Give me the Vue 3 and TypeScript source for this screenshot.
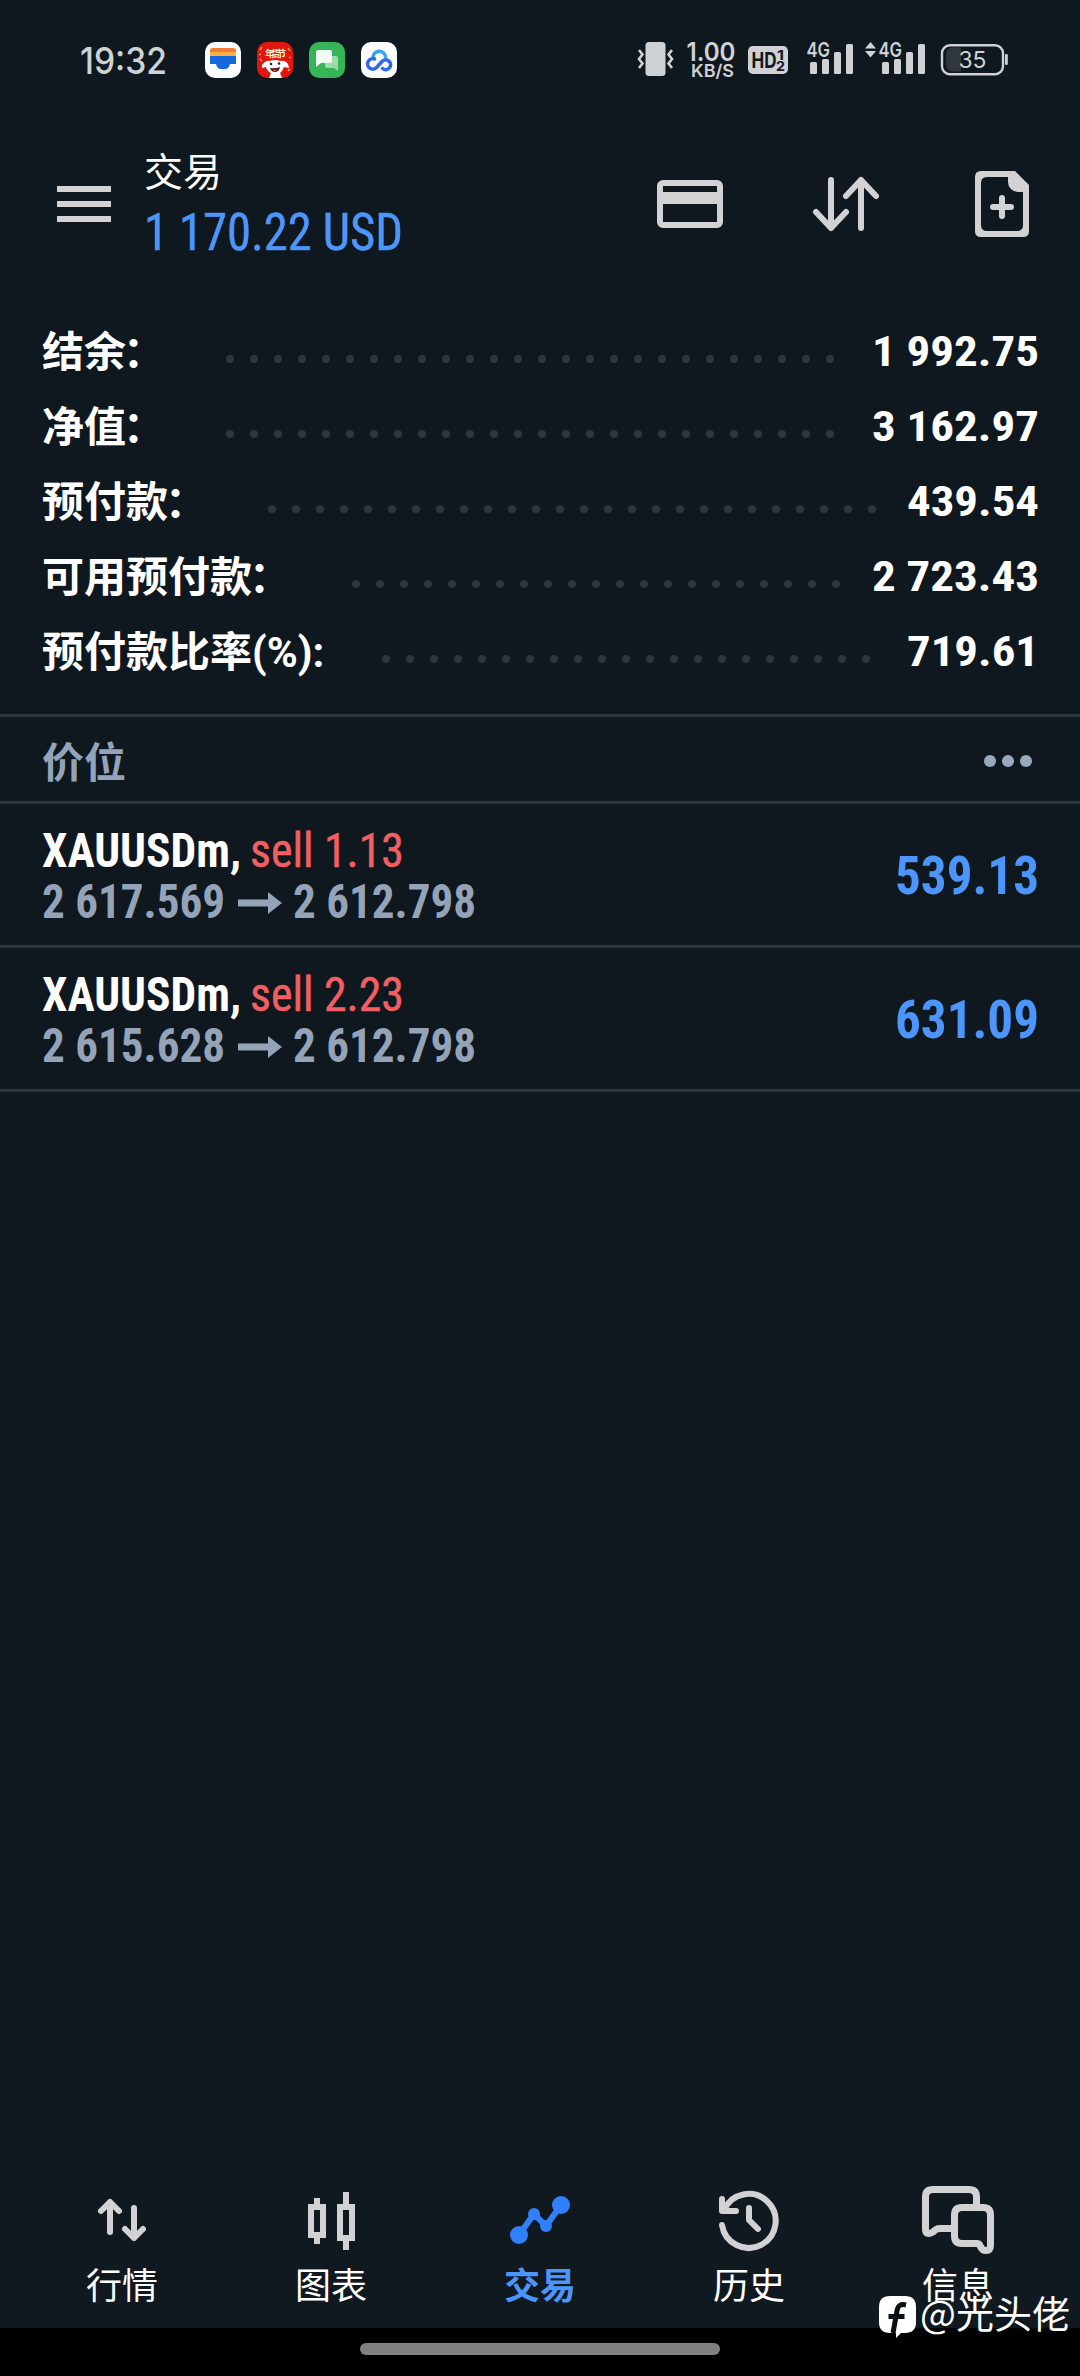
<script setup lang="ts">
import { h } from 'vue'

interface FitProps {
  text: string
  width: number
  size: number
  weight?: number
}

// Condensed text: the box is exactly as tall as the capitals, the glyphs are squeezed to the width.
const FitText = (p: FitProps) => {
  const cap = Math.round(p.size * 0.711)
  return h('svg', { width: p.width, height: cap, class: 'fit' }, [
    h(
      'text',
      {
        x: 0,
        y: cap,
        textLength: p.width,
        lengthAdjust: 'spacingAndGlyphs',
        'font-size': p.size,
        'font-weight': p.weight ?? 400,
        fill: 'currentColor',
        stroke: 'currentColor',
        'stroke-width': p.weight ? 0 : 0.5,
      },
      p.text,
    ),
  ])
}
FitText.props = ['text', 'width', 'size', 'weight']

interface SummaryRow {
  label: string
  colon: string
  dots: number
  value: string
  valueWidth: number
}

const summary: SummaryRow[] = [
  { label: '结余', colon: '：', dots: 26, value: '1 992.75', valueWidth: 167 },
  { label: '净值', colon: '：', dots: 26, value: '3 162.97', valueWidth: 167 },
  { label: '预付款', colon: '：', dots: 26, value: '439.54', valueWidth: 132 },
  { label: '可用预付款', colon: '：', dots: 21, value: '2 723.43', valueWidth: 167 },
  { label: '预付款比率(%)', colon: ':', dots: 21, value: '719.61', valueWidth: 132 },
]

const positions = [
  { symbol: 'XAUUSDm,', side: 'sell 1.13', open: '2 617.569', current: '2 612.798', profit: '539.13' },
  { symbol: 'XAUUSDm,', side: 'sell 2.23', open: '2 615.628', current: '2 612.798', profit: '631.09' },
]
</script>

<template>
  <div class="screen">
    <header class="status">
      <svg class="clock" width="90" height="44" viewBox="78 38 90 44">
        <text x="80" y="74" font-size="36.5" textLength="87" lengthAdjust="spacingAndGlyphs" fill="#cfd2d5">19:32</text>
      </svg>
      <div class="apps">
        <svg width="36" height="36" viewBox="0 0 36 36">
          <rect width="36" height="36" rx="10" fill="#fafbfd" />
          <path d="M5 14V9q0-3 3-3h20q3 0 3 3v5z" fill="#f47b35" />
          <path d="M5 10h26v6H5z" fill="#fbb043" />
          <path d="M5 14h26v8h-6q-1 5-5 5h-4q-4 0-5-5H5z" fill="#1668dc" />
        </svg>
        <svg width="36" height="36" viewBox="0 0 36 36">
          <rect width="36" height="36" rx="10" fill="#e0170f" />
          <text x="8" y="15" font-size="9.5" font-weight="700" textLength="21" fill="#fff3cf">年货节</text>
          <path d="M3 8l2-3M31 6l2 3M3 17l2 2M2 13l2-1M32 15l2 1M31 29l2-2" stroke="#ffb26b" stroke-width="1.2" />
          <path d="M5 23q4-5 8-4q5-2 10 0q5-1 8 3l1 4-5-1q-2 5-4 6l2 5H12l2-5q-4-2-5-6l-4 1z" fill="#fff" />
          <circle cx="14" cy="22" r="1.3" fill="#222" />
          <circle cx="22" cy="21.5" r="1.3" fill="#222" />
          <path d="M13 26q5 1 10-1q-1 5-5 5t-5-4z" fill="#5b1717" />
          <path d="M16 28.5q2-1 4-.5q-2 2-4 .5z" fill="#f06464" />
        </svg>
        <svg width="36" height="36" viewBox="0 0 36 36">
          <rect width="36" height="36" rx="10" fill="#35b558" />
          <path d="M16 14h11q2 0 2 2v13l-4-3H18q-2 0-2-2z" fill="#9bdcaa" />
          <path d="M9 8h12q2 0 2 2v9q0 2-2 2H12l-5 4V10q0-2 2-2z" fill="#f2fbf3" />
        </svg>
        <svg width="36" height="36" viewBox="0 0 36 36">
          <rect width="36" height="36" rx="10" fill="#fafbfd" />
          <path d="M12 15.5a6.3 6.3 0 0 1 12.5-1" fill="none" stroke="#35a5e8" stroke-width="3.6" stroke-linecap="round" />
          <path d="M13.5 17a5.2 5.2 0 1 0 2 8.5L21 19.5a4.9 4.9 0 1 1 .5 7" fill="none" stroke="#2f66ea" stroke-width="3.5" stroke-linecap="round" stroke-linejoin="round" />
        </svg>
      </div>
      <svg class="system" width="380" height="44" viewBox="634 38 380 44" fill="#cfd1d4">
        <rect x="645.5" y="42" width="20" height="34" rx="3.5" />
        <path d="M639 50l3.5 4.5-3.5 4.500 3.500 4.500-3.500 4.500M672 50l-3.500 4.500 3.500 4.500-3.500 4.500 3.500 4.500" fill="none" stroke="#cfd1d4" stroke-width="2.6" />
        <text x="686.5" y="61" font-size="25" font-weight="600" textLength="49" lengthAdjust="spacingAndGlyphs">1.00</text>
        <text x="691" y="77" font-size="17.5" font-weight="600" textLength="43" lengthAdjust="spacingAndGlyphs">KB/S</text>
        <rect x="748" y="46" width="40" height="28" rx="5" />
        <g fill="#101820" font-weight="700">
          <text x="751.5" y="67.5" font-size="21" textLength="25" lengthAdjust="spacingAndGlyphs">HD</text>
          <text x="777" y="59.5" font-size="13.5" textLength="7" lengthAdjust="spacingAndGlyphs">1</text>
          <text x="776" y="71" font-size="13.5" textLength="9" lengthAdjust="spacingAndGlyphs">2</text>
        </g>
        <rect x="810" y="62" width="7" height="12" rx="1.5" />
        <rect x="822" y="59" width="7" height="15" rx="1.5" />
        <rect x="834" y="52" width="7" height="22" rx="1.5" />
        <rect x="846" y="44" width="7" height="30" rx="1.5" />
        <text x="806.5" y="57" font-size="20" font-weight="600" textLength="23.5" lengthAdjust="spacingAndGlyphs">4G</text>
        <path d="M865 48.500l5.500-6.500 5.500 6.500zM865 51l5.500 6.500 5.500-6.500z" />
        <rect x="882" y="62" width="7" height="12" rx="1.5" />
        <rect x="894" y="59" width="7" height="15" rx="1.5" />
        <rect x="906" y="52" width="7" height="22" rx="1.5" />
        <rect x="918" y="44" width="7" height="30" rx="1.5" />
        <text x="878.5" y="57" font-size="20" font-weight="600" textLength="23.5" lengthAdjust="spacingAndGlyphs">4G</text>
        <path d="M961 47.500h-8q-7 0-7 7v10q0 7 7 7h8z" fill="#2f363e" />
        <rect x="942" y="45.2" width="61" height="29" rx="8" fill="none" stroke="#cfd1d4" stroke-width="2.4" />
        <rect x="1005" y="54" width="2.8" height="11" rx="1.2" />
        <text x="958.5" y="68" font-size="23" textLength="28" lengthAdjust="spacingAndGlyphs">35</text>
      </svg>
    </header>

    <div class="appbar">
      <svg class="menu" width="54" height="36" viewBox="0 0 54 36" fill="#d2d2d4">
        <path d="M0 0h54v6H0zM0 15h54v6H0zM0 30h54v6H0z" />
      </svg>
      <div class="heading">
        <div class="title">交易</div>
        <FitText class="blue" text="1 170.22 USD" :width="259" :size="51" />
      </div>
      <div class="actions">
        <svg width="72" height="72" viewBox="654 168 72 72" fill="none" stroke="#d2d2d4" stroke-width="6">
          <rect x="660" y="183" width="60" height="42" rx="3" />
          <path d="M660 198h60" stroke-width="12" />
        </svg>
        <svg width="72" height="72" viewBox="810 168 72 72" fill="none" stroke="#d2d2d4" stroke-width="6" stroke-linecap="round" stroke-linejoin="round">
          <path d="M831 180v48M816 212l15 16 15-16M861 228v-48M846 196l15-16 15 16" />
        </svg>
        <svg width="72" height="72" viewBox="966 168 72 72" fill="#d2d2d4">
          <path fill-rule="evenodd" d="M981 171h34l14 14v46q0 6-6 6h-42q-6 0-6-6v-54q0-6 6-6zM987 177q-6 0-6 6v42q0 6 6 6h30q6 0 6-6v-33h-5a10 10 0 0 1-10-10v-5z" />
          <path d="M1002 198v18M993 207h18" stroke="#d2d2d4" stroke-width="6" stroke-linecap="round" />
        </svg>
      </div>
    </div>

    <section class="summary">
      <div v-for="row in summary" :key="row.label" class="sum-row">
        <span class="sum-label">{{ row.label }}<span :class="{ wide: row.colon === '：' }">{{ row.colon }}</span></span>
        <i class="leader" :style="{ width: row.dots * 24 + 'px' }" />
        <FitText class="sum-value" :text="row.value" :width="row.valueWidth" :size="42" :weight="700" />
      </div>
    </section>

    <section class="section-head">
      <span>价位</span>
      <svg class="more" width="48" height="12" viewBox="0 0 48 12" fill="#99a8bd">
        <circle cx="6" cy="6" r="6" /><circle cx="24" cy="6" r="6" /><circle cx="42" cy="6" r="6" />
      </svg>
    </section>

    <section v-for="p in positions" :key="p.open" class="position">
      <div class="detail">
        <div class="line">
          <FitText class="symbol" :text="p.symbol" :width="199" :size="48" :weight="700" />
          <FitText class="side" :text="p.side" :width="154" :size="48" />
        </div>
        <div class="line prices">
          <FitText :text="p.open" :width="183" :size="48" :weight="700" />
          <svg class="arrow" width="44" height="22" viewBox="0 0 44 22" fill="currentColor">
            <path d="M0 7.500h30V0l14 11-14 11v-7.500H0z" />
          </svg>
          <FitText :text="p.current" :width="183" :size="48" :weight="700" />
        </div>
      </div>
      <FitText class="blue profit" :text="p.profit" :width="144" :size="54" :weight="700" />
    </section>

    <nav class="tabs">
      <div class="tab">
        <svg width="72" height="72" viewBox="86 2184 72 72" fill="none" stroke="#d2d2d4" stroke-width="6" stroke-linecap="round" stroke-linejoin="round">
          <path d="M110 2232v-30M101 2211l9-9 9 9M134 2208v30M125 2229l9 9 9-9" />
        </svg>
        <span>行情</span>
      </div>
      <div class="tab">
        <svg width="72" height="72" viewBox="295 2184 72 72" fill="none" stroke="#d2d2d4" stroke-width="6">
          <path d="M311 2207h12v28h-12zM317 2198v6M317 2238v6M340 2207h12v31h-12zM346 2192v12M346 2241v9" />
        </svg>
        <span>图表</span>
      </div>
      <div class="tab active">
        <svg width="72" height="72" viewBox="504 2184 72 72" fill="#3080fa">
          <path d="M519 2235l15-21 12 12 15-21" fill="none" stroke="#3080fa" stroke-width="6" />
          <circle cx="519" cy="2235" r="9" /><circle cx="534" cy="2214" r="6" />
          <circle cx="546" cy="2226" r="6" /><circle cx="561" cy="2205" r="9" />
        </svg>
        <span>交易</span>
      </div>
      <div class="tab">
        <svg width="72" height="72" viewBox="713 2184 72 72" fill="none" stroke="#d2d2d4" stroke-width="6" stroke-linecap="round" stroke-linejoin="round">
          <path d="M722 2225a27 27 0 1 0 2-15M722 2199v12h14M749 2208v12l9 9" />
        </svg>
        <span>历史</span>
      </div>
      <div class="tab">
        <svg width="72" height="72" viewBox="922 2184 72 72" fill="none" stroke="#d2d2d4" stroke-width="7" stroke-linejoin="round">
          <path d="M952 2228.500h-12q-4 0-7 3.500q-7.500 4-7.500-3v-32q0-7.500 7.500-7.500h36q7.500 0 7.500 7.500v9" />
          <path d="M962 2207.500h21q7.500 0 7.500 7.500v30q0 5.500-4.500 5.500-4 0-5.500-4-1-3-4-3H962q-7.500 0-7.500-7.500V2215q0-7.500 7.500-7.500z" />
        </svg>
        <span>信息</span>
      </div>
    </nav>
    <div class="homebar"><i /></div>

    <div class="watermark">
      <svg width="37" height="42" viewBox="0 0 37 42">
        <path d="M11 0h15q11 0 11 11v15q0 11-11 11h-4l-5 5v-5h-6Q0 37 0 26V11Q0 0 11 0z" fill="#fff" />
        <path d="M27 9q-8-2-9 6l-4 22M9.500 20.500h16" fill="none" stroke="#0a0f14" stroke-width="5" />
      </svg>
      <span>@光头佬</span>
    </div>
  </div>
</template>

<style>
body {
  background: #0f171f;
}
</style>

<style scoped>
.screen {
  position: relative;
  display: flex;
  flex-direction: column;
  width: 1080px;
  height: 2376px;
  overflow: hidden;
  background: #0f171f;
  color: #fff;
  font-family: Roboto, 'Noto Sans CJK SC', sans-serif;
}
svg {
  display: block;
  flex: none;
  overflow: visible;
}
.fit {
  font-family: 'Roboto Condensed', Roboto, sans-serif;
  white-space: pre;
}
.blue {
  color: #4c95fb;
}
.status {
  display: flex;
  height: 82px;
  padding: 38px 66px 0 78px;
  box-sizing: border-box;
  font-family: Inter, 'Noto Sans CJK SC', sans-serif;
}
.clock {
  font-weight: 500;
}
.apps {
  display: flex;
  gap: 16px;
  margin: 4px 0 0 37px;
}
.system {
  margin-left: auto;
}
.appbar {
  display: flex;
  height: 232px;
  padding: 70px 42px 0 57px;
  box-sizing: border-box;
}
.menu {
  margin-top: 34px;
}
.heading {
  margin-left: 33px;
}
.title {
  height: 39px;
  margin: 2px 0 21px;
  font-size: 39px;
  line-height: 39px;
}
.actions {
  display: flex;
  gap: 84px;
  margin: 16px 0 0 auto;
}
.sum-row {
  display: flex;
  align-items: center;
  height: 75px;
  padding: 0 41px 0 42px;
}
.sum-label {
  margin-top: 2px;
  font-size: 42px;
  line-height: 42px;
  font-weight: 700;
  white-space: nowrap;
}
.wide {
  margin: 0 3px 0 -3px;
}
.leader {
  height: 8px;
  margin: 15px 0 0 50px;
  background: radial-gradient(circle, #2e353e 3.6px, transparent 4.4px) 0 0 / 24px 8px repeat-x;
}
.sum-value {
  margin: -2px 0 0 auto;
}
.section-head {
  display: flex;
  align-items: center;
  justify-content: space-between;
  height: 90px;
  margin-top: 25px;
  padding: 0 48px 0 42px;
  box-sizing: border-box;
  border: solid #2b333f;
  border-width: 3px 0;
  color: #94a3b8;
  font-size: 42px;
  font-weight: 700;
}
.more {
  margin-top: 4px;
}
.position {
  display: flex;
  justify-content: space-between;
  height: 144px;
  padding: 29px 41px 0 42px;
  box-sizing: border-box;
  border-bottom: 3px solid #2b333f;
}
.line {
  display: flex;
}
.side {
  margin-left: 9px;
  color: #f25f62;
}
.prices {
  margin-top: 17px;
  color: #94a3b8;
}
.arrow {
  margin: 8px 11px 0 13px;
}
.profit {
  margin-top: 23px;
}
.tabs {
  display: flex;
  justify-content: center;
  height: 191px;
  margin-top: auto;
  background: #101820;
}
.tab {
  display: flex;
  flex-direction: column;
  align-items: center;
  width: 209px;
  padding-top: 47px;
  font-size: 36px;
  line-height: 36px;
}
.tab span {
  margin-top: 13px;
}
.active {
  color: #4c95fb;
  font-weight: 700;
}
.homebar {
  display: flex;
  justify-content: center;
  height: 48px;
  padding-top: 15px;
  box-sizing: border-box;
  background: #000;
}
.homebar i {
  width: 360px;
  height: 12px;
  border-radius: 6px;
  background: #808080;
}
.watermark {
  position: absolute;
  right: 10px;
  bottom: 38px;
  display: flex;
  align-items: center;
  gap: 4px;
  font-family: 'Noto Sans CJK SC', sans-serif;
  font-size: 38px;
  line-height: 36px;
}
.watermark span {
  margin-top: -11px;
}
</style>
